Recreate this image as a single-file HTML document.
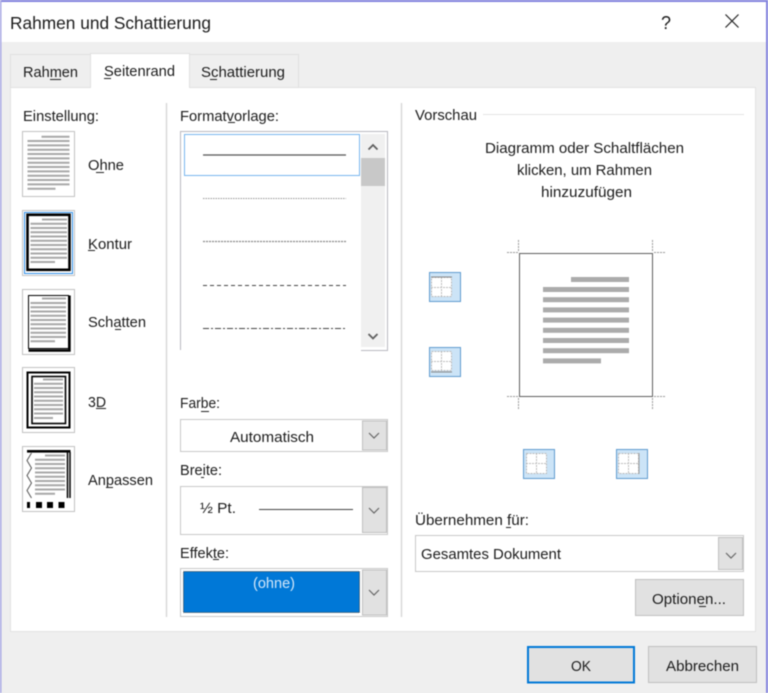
<!DOCTYPE html>
<html lang="de">
<head>
<meta charset="utf-8">
<title>Rahmen und Schattierung</title>
<style>
html,body{margin:0;padding:0;background:#f0f0f0;width:768px;height:693px;overflow:hidden}
svg{display:block;filter:blur(.4px)}
text{font-family:"Liberation Sans",sans-serif;font-size:14.5px;fill:#1c1c1c}
.u{stroke:#222;stroke-width:1;fill:none}
.l{stroke:#a8a8a8;stroke-width:2;fill:none}
.b{fill:#e1e1e1;stroke:#c0c0c0;stroke-width:1}
.c{fill:#fff;stroke:#c8c8c8;stroke-width:1}
.ch{fill:none;stroke:#666;stroke-width:1.2}
</style>
</head>
<body>
<svg width="768" height="693" viewBox="0 0 768 693" xmlns="http://www.w3.org/2000/svg">
<rect width="768" height="693" fill="#efefef"/>
<rect width="768" height="42" fill="#fff"/>
<rect width="768" height="2" fill="#8383de"/>
<rect x="0" width="1.5" height="693" fill="#a9a9e6"/>
<rect x="766" width="2" height="693" fill="#8383de"/>

<!-- title -->
<text x="10" y="29" style="font-size:17.5px" textLength="201" lengthAdjust="spacingAndGlyphs">Rahmen und Schattierung</text>
<text x="661" y="29" style="font-size:18px" textLength="10" lengthAdjust="spacingAndGlyphs">?</text>
<path d="M725.500 14.500L738.500 27.500M738.500 14.500L725.500 27.500" stroke="#222" stroke-width="1.200" fill="none"/>

<!-- panel and tabs -->
<rect x="10.500" y="87.500" width="745" height="544" fill="#fff" stroke="#e2e2e2"/>
<rect x="10.500" y="54.500" width="80" height="33" fill="#efefef" stroke="#e0e0e0"/>
<rect x="189.500" y="54.500" width="109" height="33" fill="#efefef" stroke="#e0e0e0"/>
<path d="M90.500 87.500V53.500H189.500V87.500" fill="#fff" stroke="#e0e0e0"/>
<rect x="91" y="60" width="98" height="29" fill="#fff"/>
<text x="23" y="77" textLength="55" lengthAdjust="spacingAndGlyphs">Rahmen</text>
<path class="u" d="M50 79.500H61"/>
<text x="104" y="76" textLength="71" lengthAdjust="spacingAndGlyphs">Seitenrand</text>
<path class="u" d="M104 78.500H111"/>
<text x="201" y="77" textLength="84" lengthAdjust="spacingAndGlyphs">Schattierung</text>
<path class="u" d="M210 79.500H217"/>

<!-- dividers -->
<path d="M166.500 103V617M401.500 103V617" stroke="#d4d4d4" stroke-width="1.300" fill="none"/>
<path d="M483 114.500H744" stroke="#e4e4e4" fill="none"/>

<!-- left column -->
<text x="23" y="121" textLength="76" lengthAdjust="spacingAndGlyphs">Einstellung:</text>

<rect x="22.500" y="131.500" width="52" height="65" fill="#fff" stroke="#c2c2c2"/>
<path class="l" d="M41.500 136.700H69.500M27.500 141H69.500M27.500 145.400H69.500M27.500 149.700H69.500M27.500 154H69.500M27.500 158.400H69.500M27.500 162.700H69.500M27.500 167H69.500M27.500 171.400H69.500M27.500 175.700H69.500M27.500 180H69.500M27.500 184.400H69.500M27.500 188.700H55.500"/>
<text x="88" y="170" textLength="36" lengthAdjust="spacingAndGlyphs">Ohne</text>
<path class="u" d="M96 172.500H104"/>

<rect x="22.500" y="210.500" width="52" height="65" fill="#fff" stroke="#c2c2c2"/>
<rect x="24.500" y="212.500" width="48" height="61" fill="none" stroke="#2f8fe8"/>
<rect x="27.500" y="214.800" width="42" height="55" fill="none" stroke="#000" stroke-width="2.600"/>
<path class="l" d="M42 219.500H67M30.500 223.700H67M30.500 228H67M30.500 232.300H67M30.500 236.500H67M30.500 240.800H67M30.500 245H67M30.500 249.300H67M30.500 253.500H67M30.500 257.800H67M30.500 262H55"/>
<text x="88" y="249" textLength="44" lengthAdjust="spacingAndGlyphs">Kontur</text>
<path class="u" d="M88 250.500H95"/>

<rect x="22.500" y="289.500" width="52" height="65" fill="#fff" stroke="#c2c2c2"/>
<rect x="28.500" y="295.500" width="40" height="53" fill="none" stroke="#000"/>
<path d="M69.500 295.500V350.500H28.500" fill="none" stroke="#000" stroke-width="2.400"/>
<path class="l" d="M42 298.500H66M30.500 303H66M30.500 307.300H66M30.500 311.500H66M30.500 315.800H66M30.500 320H66M30.500 324.300H66M30.500 328.500H66M30.500 332.800H66M30.500 337H66M30.500 341.300H55"/>
<text x="88" y="327" textLength="58" lengthAdjust="spacingAndGlyphs">Schatten</text>
<path class="u" d="M115 329.500H121"/>

<rect x="22.500" y="367.500" width="52" height="65" fill="#fff" stroke="#c2c2c2"/>
<rect x="27.500" y="372.500" width="42" height="55" fill="none" stroke="#000" stroke-width="2"/>
<rect x="32" y="376.500" width="33.500" height="47" fill="none" stroke="#000" stroke-width="1.600"/>
<path class="l" d="M43 379.500H63M34 383.800H63M34 388H63M34 392.300H63M34 396.500H63M34 400.800H63M34 405H63M34 409.300H63M34 413.500H63M34 418H53"/>
<text x="88" y="407" textLength="18" lengthAdjust="spacingAndGlyphs">3D</text>
<path class="u" d="M96 408.500H106"/>

<rect x="22.500" y="446.500" width="52" height="65" fill="#fff" stroke="#c2c2c2"/>
<rect x="27" y="450" width="43.500" height="2.600" fill="#000"/>
<path d="M67.500 452V498M70 452V498" stroke="#000" stroke-width="1.500" fill="none"/>
<path d="M31.500 453L27 460.500L31.500 468L27 475.500L31.500 483L27 490.500L31.500 498" stroke="#555" stroke-width="1" fill="none"/>
<rect x="27" y="502" width="3" height="6" fill="#000"/>
<rect x="36" y="502" width="6" height="6" fill="#000"/>
<rect x="47" y="502" width="6" height="6" fill="#000"/>
<rect x="58.500" y="502" width="6" height="6" fill="#000"/>
<path class="l" d="M45 455.500H65M35 459.800H65M35 464H65M35 468.300H65M35 472.500H65M35 476.800H65M35 481H65M35 485.300H65M35 489.500H65M35 493.800H55"/>
<text x="88" y="485" textLength="65" lengthAdjust="spacingAndGlyphs">Anpassen</text>
<path class="u" d="M106 487.500H113"/>

<!-- format list -->
<text x="180" y="121" textLength="99" lengthAdjust="spacingAndGlyphs">Formatvorlage:</text>
<path class="u" d="M228 122.500H235"/>
<path d="M180.500 350V131.500H387.500V350.500H361" fill="#fff" stroke="#b8b8c0"/>
<rect x="184.500" y="134.500" width="175" height="41" fill="#fff" stroke="#78b6ee"/>
<rect x="361" y="134" width="24" height="213" fill="#f0f0f0"/>
<rect x="361" y="158" width="24" height="28" fill="#c8c8c8"/>
<path d="M368.500 149.500L373 145L377.500 149.500M368.500 334L373 338.500L377.500 334" stroke="#606060" stroke-width="1.800" fill="none"/>
<path d="M203 155H346" stroke="#555" stroke-width="1.200"/>
<path d="M203 198.500H346" stroke="#999" stroke-width="1" stroke-dasharray="1.500 1"/>
<path d="M203 241.500H346" stroke="#888" stroke-width="1.300" stroke-dasharray="2 1"/>
<path d="M203 285.500H346" stroke="#444" stroke-width="1" stroke-dasharray="4 3"/>
<path d="M203 328.500H346" stroke="#444" stroke-width="1" stroke-dasharray="6 2 2 2"/>

<!-- Farbe -->
<text x="180" y="408" textLength="40" lengthAdjust="spacingAndGlyphs">Farbe:</text>
<path class="u" d="M201 411.500H209"/>
<rect class="c" x="180.500" y="419.500" width="207" height="32"/>
<rect class="b" x="362.500" y="421" width="24" height="29"/>
<path class="ch" d="M369 433L374 438L379 433"/>
<text x="230" y="442" textLength="84" lengthAdjust="spacingAndGlyphs">Automatisch</text>

<!-- Breite -->
<text x="180" y="475" textLength="42" lengthAdjust="spacingAndGlyphs">Breite:</text>
<path class="u" d="M201 477.500H204"/>
<rect class="c" x="180.500" y="486.500" width="207" height="48"/>
<rect class="b" x="362.500" y="487.500" width="24" height="45"/>
<path class="ch" d="M369 508L374 513L379 508"/>
<text x="200" y="513" textLength="36" lengthAdjust="spacingAndGlyphs">½ Pt.</text>
<path d="M259 509.500H353" stroke="#444" stroke-width="1"/>

<!-- Effekte -->
<text x="180" y="558" textLength="49" lengthAdjust="spacingAndGlyphs">Effekte:</text>
<path class="u" d="M213 559.500H219"/>
<rect class="c" x="180.500" y="568.500" width="207" height="48"/>
<rect x="183.500" y="571.500" width="176" height="41" fill="#0078d7" stroke="#333" stroke-width="1" stroke-dasharray="1 1"/>
<rect class="b" x="362.500" y="570" width="24" height="45"/>
<path class="ch" d="M369 590L374 595L379 590"/>
<text x="253" y="588" style="fill:#d4e8fa" textLength="42" lengthAdjust="spacingAndGlyphs">(ohne)</text>

<!-- preview -->
<text x="415" y="120" textLength="62" lengthAdjust="spacingAndGlyphs">Vorschau</text>
<text x="485" y="153" textLength="199" lengthAdjust="spacingAndGlyphs">Diagramm oder Schaltflächen</text>
<text x="517" y="175" textLength="135" lengthAdjust="spacingAndGlyphs">klicken, um Rahmen</text>
<text x="541" y="197" textLength="91" lengthAdjust="spacingAndGlyphs">hinzuzufügen</text>

<rect x="519.500" y="253.500" width="133" height="143" fill="#fff" stroke="#5e5e5e"/>
<path d="M518.500 240V252M507 252.500H518M652.500 240V252M654 252.500H666M518.500 398V409M507 396.500H518M652.500 398V409M654 396.500H666" stroke="#999" stroke-width="1" stroke-dasharray="2 1" fill="none"/>
<g fill="#ababab">
<rect x="571" y="277" width="58" height="5"/>
<rect x="543" y="287" width="86" height="5"/>
<rect x="543" y="297.200" width="86" height="5"/>
<rect x="543" y="307.400" width="86" height="5"/>
<rect x="543" y="317.600" width="86" height="5"/>
<rect x="543" y="327.800" width="86" height="5"/>
<rect x="543" y="338" width="86" height="5"/>
<rect x="543" y="348.200" width="86" height="5"/>
<rect x="543" y="358.400" width="58" height="5"/>
</g>

<!-- preview buttons -->
<g>
<rect x="429.500" y="272.500" width="31" height="29" fill="#cce4f7" stroke="#5f9bcf"/>
<rect x="431.500" y="277.500" width="20" height="19" fill="#fff" stroke="#bbb" stroke-dasharray="2 1"/>
<path d="M441.500 277V297M431 287.500H452" stroke="#bbb" stroke-dasharray="2 1" fill="none"/>
<path d="M431 277H452" stroke="#888" fill="none"/>

<rect x="429.500" y="347.500" width="31" height="29" fill="#cce4f7" stroke="#5f9bcf"/>
<rect x="431.500" y="351.500" width="20" height="19" fill="#fff" stroke="#bbb" stroke-dasharray="2 1"/>
<path d="M441.500 351V372M431 361.500H452" stroke="#bbb" stroke-dasharray="2 1" fill="none"/>
<path d="M431 372H452" stroke="#888" fill="none"/>

<rect x="523.500" y="449.500" width="31" height="29" fill="#cce4f7" stroke="#5f9bcf"/>
<rect x="526.500" y="453.500" width="20" height="20" fill="#fff" stroke="#bbb" stroke-dasharray="2 1"/>
<path d="M536.500 453V474M526 463.500H547" stroke="#bbb" stroke-dasharray="2 1" fill="none"/>

<rect x="616.500" y="449.500" width="31" height="29" fill="#cce4f7" stroke="#5f9bcf"/>
<rect x="618.500" y="453.500" width="20" height="20" fill="#fff" stroke="#bbb" stroke-dasharray="2 1"/>
<path d="M628.500 453V474M618 463.500H639" stroke="#bbb" stroke-dasharray="2 1" fill="none"/>
<path d="M639 453V474" stroke="#999" fill="none"/>
</g>

<!-- apply -->
<text x="415" y="525" textLength="114" lengthAdjust="spacingAndGlyphs">Übernehmen für:</text>
<path class="u" d="M506 527.500H511"/>
<rect class="c" x="415.500" y="535.500" width="328" height="36"/>
<rect class="b" x="718.500" y="537.500" width="24" height="32"/>
<path class="ch" d="M726 553L731 558L736 553"/>
<text x="421" y="559" textLength="140" lengthAdjust="spacingAndGlyphs">Gesamtes Dokument</text>

<rect class="b" x="635.500" y="579.500" width="108" height="36"/>
<text x="652" y="604" textLength="74" lengthAdjust="spacingAndGlyphs">Optionen...</text>
<path class="u" d="M699 606.500H706"/>

<!-- bottom buttons -->
<rect x="528" y="647" width="106" height="35.500" fill="#e1e1e1" stroke="#0078d7" stroke-width="2"/>
<text x="571" y="671" textLength="20" lengthAdjust="spacingAndGlyphs">OK</text>
<rect class="b" x="648.500" y="646.500" width="108" height="36"/>
<text x="666" y="671" textLength="73" lengthAdjust="spacingAndGlyphs">Abbrechen</text>
</svg>
</body>
</html>
